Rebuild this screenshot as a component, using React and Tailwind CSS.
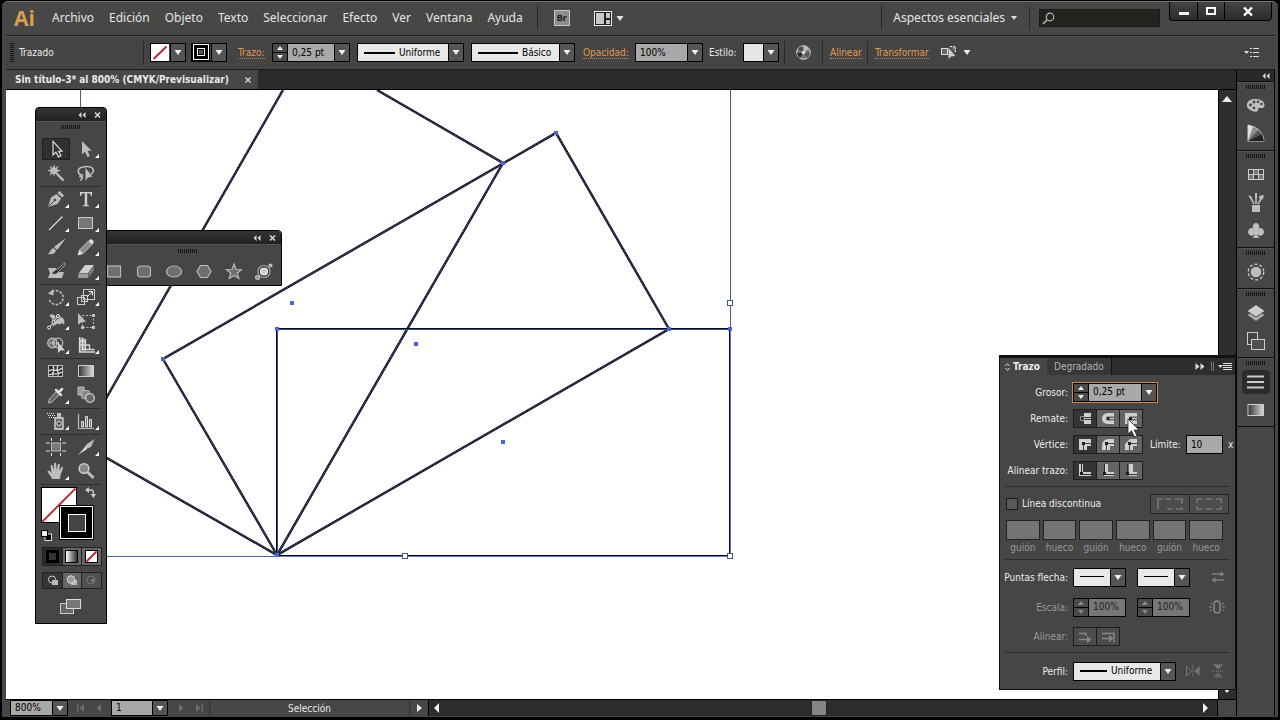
import React from "react";

const UI = "font-['DejaVu_Sans_Condensed','DejaVu_Sans',sans-serif]";
const MENU = "font-['Noto_Sans',sans-serif]";

/* ---------- small shared pieces ---------- */

function Down({ className = "" }) {
  return (
    <svg width="8" height="5" viewBox="0 0 8 5" className={`shrink-0 ${className}`} aria-hidden="true">
      <path d="M0.5 0H7.5L4 5Z" fill="currentColor" />
    </svg>
  );
}

function ArrowBox() {
  return (
    <span className="pointer-events-none flex w-[15px] shrink-0 items-center justify-center self-stretch border-l border-black bg-[#555] text-[#f0f0f0]">
      <Down />
    </span>
  );
}

function Grip() {
  return (
    <svg width="20" height="4" viewBox="0 0 20 4" aria-hidden="true">
      <path d="M0.5 0V4M2.5 0V4M4.5 0V4M6.5 0V4M8.5 0V4M10.5 0V4M12.5 0V4M14.5 0V4M16.5 0V4M18.5 0V4" stroke="#161616" />
    </svg>
  );
}

function Spinner({ label, dim }) {
  return (
    <span className={`flex w-[15px] shrink-0 flex-col border-r border-black bg-[#4a4a4a] ${dim ? "text-[#8a8a8a]" : "text-[#eee]"}`}>
      <button aria-label={`Aumentar ${label}`} className="flex flex-1 items-center justify-center border-b border-black">
        <svg width="6" height="4" viewBox="0 0 6 4"><path d="M0 4H6L3 0Z" fill="currentColor" /></svg>
      </button>
      <button aria-label={`Reducir ${label}`} className="flex flex-1 items-center justify-center">
        <svg width="6" height="4" viewBox="0 0 6 4"><path d="M0 0H6L3 4Z" fill="currentColor" /></svg>
      </button>
    </span>
  );
}

function LineSelect({ label, text, width, line }) {
  return (
    <span className={`flex h-[19px] items-center border border-black bg-[#e8e8e8] text-black ${width}`}>
      <svg height="2" viewBox={`0 0 ${line} 2`} width={line} className="ml-1.5 shrink-0" aria-hidden="true">
        <path d={text ? `M0 1H${line}` : `M0 .5H${line}`} stroke="#000" strokeWidth={text ? 2 : 1} />
      </svg>
      <select aria-label={label} className="ml-1 h-[17px] min-w-0 flex-1 appearance-none bg-transparent text-[10px] leading-4 outline-none">
        <option>{text}</option>
      </select>
      <ArrowBox />
    </span>
  );
}

function NumberCombo({ label, value, width, arrow = true, spinner = true, dim }) {
  return (
    <span className={`flex h-[19px] items-stretch border border-black ${width} ${dim ? "bg-[#777] text-[#222]" : "bg-[#a9a9a9] text-black"}`}>
      {spinner && <Spinner label={label} dim={dim} />}
      <input aria-label={label} defaultValue={value} className="min-w-0 flex-1 bg-transparent px-1 text-[10px] leading-3.5 outline-none" />
      {arrow && (
        <button aria-label={`${label}: valores`} className="flex">
          <ArrowBox />
        </button>
      )}
    </span>
  );
}

function Sep() {
  return <span className="h-6 w-px shrink-0 bg-[#2b2b2b]" />;
}

function Orange({ children }) {
  return (
    <a href="#panel" className="border-b border-dotted border-[#c9843f] leading-[11px] text-[#e39a52]">
      {children}
    </a>
  );
}

/* ---------- top bars ---------- */

const menus = ["Archivo", "Edición", "Objeto", "Texto", "Seleccionar", "Efecto", "Ver", "Ventana", "Ayuda"];

function TitleBar() {
  return (
    <header className={`flex h-[33px] shrink-0 items-start pl-2 text-[12px] text-[#e6e6e6] ${MENU}`}>
      <div className="flex h-8 w-[38px] shrink-0 items-center font-['Open_Sans',sans-serif] text-[21px] leading-none font-bold text-[#d6a050]">Ai</div>
      <nav className="flex h-8 items-center gap-[15px]">
        {menus.map((m) => (
          <button key={m}>{m}</button>
        ))}
      </nav>
      <div className="ml-3.5 flex h-8 items-center">
        <Sep />
        <button className="ml-4 flex h-4 w-4 items-center justify-center border border-[#c8c8c8] bg-[#8d8d8d] text-[9px] font-bold text-[#1a1a1a]">Br</button>
        <button aria-label="Organizar documentos" className="ml-6 flex items-center gap-1">
          <svg width="18" height="15" viewBox="0 0 18 15">
            <path d="M0 0H18V15H0Z" fill="#eee" />
            <path d="M1 1H17V14H1Z" fill="#222" />
            <path d="M2 2H10V13H2ZM12 2H16V7H12ZM12 9H16V13H12Z" fill="#c8c8c8" />
          </svg>
          <Down />
        </button>
      </div>
      <div className="ml-auto flex h-8 items-center">
        <Sep />
        <button className="ml-[11px] flex items-center gap-1.5">
          Aspectos esenciales
          <svg width="6" height="4" viewBox="0 0 6 4"><path d="M0 0H6L3 4Z" fill="#ddd" /></svg>
        </button>
        <span className="ml-3 flex"><Sep /></span>
        <div className="ml-[9px] flex h-[18px] w-[121px] items-center border border-[#1a1a1a] bg-[#222420] pl-0.5">
          <svg width="13" height="13" viewBox="0 0 13 13" aria-hidden="true">
            <circle cx="8" cy="5" r="3.8" fill="none" stroke="#bbb" strokeWidth="1.2" />
            <path d="M5.2 7.8L1 12" stroke="#bbb" strokeWidth="1.5" />
          </svg>
          <input aria-label="Buscar" className="h-4 min-w-0 flex-1 bg-transparent text-[10px] leading-4 outline-none" />
        </div>
      </div>
      <div className="mr-[3px] ml-[9px] flex h-[19px] overflow-hidden rounded-b border border-t-0 border-black bg-linear-to-b from-[#444] to-[#2b2b2b]">
        <button aria-label="Minimizar" className="flex w-7 items-center justify-center border-r border-black">
          <span className="mt-1 h-[3px] w-2.5 bg-white" />
        </button>
        <button aria-label="Maximizar" className="flex w-[27px] items-center justify-center border-r border-black">
          <span className="h-2 w-2.5 border-2 border-white" />
        </button>
        <button aria-label="Cerrar" className="flex w-[46px] items-center justify-center">
          <svg width="10" height="9" viewBox="0 0 10 9"><path d="M1 0.5L9 8.5M9 0.5L1 8.5" stroke="#fff" strokeWidth="2.4" /></svg>
        </button>
      </div>
    </header>
  );
}

function SwatchButton({ label, children }) {
  return (
    <button aria-label={label} className="flex h-[19px] w-9 shrink-0 border border-black">
      <span className="flex min-w-0 flex-1">{children}</span>
      <ArrowBox />
    </button>
  );
}

function ControlBar() {
  return (
    <div className={`flex h-[35px] shrink-0 items-center border-y border-[#1c1c1c] bg-[#444] pl-1 text-[10px] whitespace-nowrap text-[#eaeaea] shadow-[inset_0_1px_0_#555] ${UI}`}>
      <svg width="4" height="20" viewBox="0 0 4 20" className="shrink-0" aria-hidden="true">
        <path d="M0 .5H4M0 2.5H4M0 4.5H4M0 6.5H4M0 8.5H4M0 10.5H4M0 12.5H4M0 14.5H4M0 16.5H4M0 18.5H4" stroke="#1a1a1a" />
      </svg>
      <span className="ml-[5px] w-[124px] shrink-0">Trazado</span>
      <Sep />
      <div className="ml-1.5 flex gap-[5px]">
        <SwatchButton label="Relleno">
          <svg width="18" height="17" viewBox="0 0 18 17"><path d="M0 0H18V17H0Z" fill="#fff" /><path d="M2.5 15L15.5 2.500" stroke="#b8222c" strokeWidth="1.8" /></svg>
        </SwatchButton>
        <SwatchButton label="Trazo">
          <svg width="18" height="17" viewBox="0 0 18 17"><path d="M0 0H18V17H0Z" fill="#000" /><rect x="1.500" y="0.500" width="15" height="15" fill="none" stroke="#fff" /><rect x="5" y="4" width="8" height="8" fill="#fff" /><rect x="6" y="5" width="6" height="6" fill="#000" /><rect x="7" y="6" width="4" height="4" fill="#555" /></svg>
        </SwatchButton>
      </div>
      <span className="ml-[11px] w-[34px]"><Orange>Trazo:</Orange></span>
      <NumberCombo label="Grosor de trazo" value="0,25 pt" width="w-[78px]" />
      <span className="ml-[7px] flex gap-[7px]">
        <LineSelect label="Perfil de anchura" text="Uniforme" width="w-[107px]" line={31} />
        <LineSelect label="Definición de pincel" text="Básico" width="w-[104px]" line={40} />
      </span>
      <span className="ml-2 w-[52px]"><Orange>Opacidad:</Orange></span>
      <NumberCombo label="Opacidad" value="100%" width="w-[68px]" spinner={false} />
      <span className="ml-1.5 w-[34px]">Estilo:</span>
      <SwatchButton label="Estilo gráfico"><span className="flex-1 bg-[#e6e6e6]" /></SwatchButton>
      <span className="ml-[5px] flex"><Sep /></span>
      <button aria-label="Volver a colorear ilustración" className="mx-[11px]">
        <svg width="15" height="15" viewBox="0 0 15 15">
          <circle cx="7.500" cy="7.500" r="6.800" fill="#777" stroke="#ddd" />
          <path d="M7.500 7.500L7.500 1A6.500 6.500 0 0 1 13 4Z" fill="#bbb" />
          <path d="M7.500 7.500L14 7.500A6.500 6.500 0 0 1 11 13Z" fill="#555" />
          <path d="M7.500 7.500L4 13A6.500 6.500 0 0 1 1 8Z" fill="#2b2b2b" />
          <path d="M7.500 7.500L2 4A6.500 6.500 0 0 1 6 1.200Z" fill="#444" />
          <circle cx="7.500" cy="7.500" r="1.800" fill="#ddd" />
        </svg>
      </button>
      <Sep />
      <span className="ml-[7px] w-[37px]"><Orange>Alinear</Orange></span>
      <Sep />
      <span className="ml-[7px]"><Orange>Transformar</Orange></span>
      <button aria-label="Seleccionar objetos similares" className="ml-3 flex items-center gap-1.5">
        <svg width="16" height="15" viewBox="0 0 16 15">
          <rect x="0.500" y="3.500" width="6" height="6" fill="#666" stroke="#ddd" />
          <path d="M9 1.500H14.500V8" fill="#777" stroke="#ddd" strokeDasharray="2 1" />
          <path d="M7.500 2.500V14L10 11.500L14.500 11Z" fill="#ccc" />
        </svg>
        <Down />
      </button>
      <button aria-label="Menú del panel Control" className="mr-4 ml-auto">
        <svg width="15" height="9" viewBox="0 0 15 9"><path d="M0 3H5L2.500 6Z" fill="#ddd" /><path d="M6 .5H8M9 .5H15M6 4.500H8M9 4.500H15M6 8.500H8M9 8.500H15" stroke="#ddd" /></svg>
      </button>
    </div>
  );
}

/* ---------- tool icons (18 x 18) ---------- */

const L = "#bdbdbd";
const toolIcons = {
  sel: <path d="M6 1.500V15L9 12.200L11.500 17L14 15.800L11.700 11.200H15Z" fill="#333" stroke="#e8e8e8" strokeWidth="1.100" />,
  direct: <path d="M5 1V14.500L8 11.700L10.500 17L12.800 16L10.500 10.700H14.500Z" fill={L} />,
  wand: <><path d="M7 0L8.200 4L11.500 1.500L10 5.200L14 6.500L10 8L11.500 11.500L8 9.500L7 13L6 9.500L2.500 11.500L4 8L0 6.500L4 5.200L2.500 1.500L5.800 4Z" fill={L} /><path d="M10 10L16.500 16.500" stroke={L} strokeWidth="2.400" /></>,
  lasso: <><path d="M4 11C0 9 0 4 6 3C12 1.500 17 3.500 16.500 7C16.300 8.500 15 9.500 14 10M4 11C2.500 11 2.500 13.500 4.500 13C6.500 12.500 5 10 4 11M5 13C6 15 4 16 3 16" fill="none" stroke={L} strokeWidth="1.600" /><path d="M8.500 4V17L11 13.500L15.500 12.500Z" fill={L} /></>,
  pen: <><path d="M1 17L4 7.500L9.500 4L14 8.500L10.500 14Z" fill={L} /><path d="M10.500 3L12.500 1L17 5.500L15 7.500Z" fill={L} /><path d="M1.500 16.500L7.500 10.500" stroke="#444" /><circle cx="8" cy="10" r="1.300" fill="#444" /></>,
  type: <path d="M3 2H15V6H14C13.700 4 13 3.300 11 3.300H10.200V14C10.200 15 10.800 15.300 12.200 15.400V16.300H5.800V15.400C7.200 15.300 7.800 15 7.800 14V3.300H7C5 3.300 4.300 4 4 6H3Z" fill="#cfcfcf" />,
  line: <path d="M2 16L15.500 2.500" stroke="#d8d8d8" strokeWidth="1.300" />,
  rect: <rect x="1.500" y="3.500" width="14" height="11" fill="#777" stroke="#ccc" />,
  brush: <><path d="M17.500 1.500L10 11.500L7.500 9Z" fill={L} stroke={L} /><path d="M6.500 10L9 12.500C8.500 15.500 5 17 0.500 16C3.500 15 3 11 6.500 10Z" fill={L} /></>,
  pencil: <><path d="M1 17L2.500 12L11.500 3L15 6.500L6 15.500Z" fill="#8d8d8d" stroke={L} /><path d="M11.500 3L13 1.500C14.500 0.500 17.500 3.500 16.500 5L15 6.500Z" fill="#ddd" /><path d="M1 17L2.500 12L6 15.500Z" fill="#ddd" /></>,
  blob: <><path d="M1 6H9V10H17L15 16H1L3 11Z" fill={L} /><path d="M17.500 1L10 7.500C7 7.500 7 10.500 4 11.500C7 13 11 12 11.500 9.500L18 3Z" fill="#2e2e2e" stroke={L} strokeWidth=".8" /></>,
  eraser: <><path d="M8 3H17L11 11H2Z" fill="#d0d0d0" /><path d="M1.500 11.500H11V16H1Z" fill="#9d9d9d" /><path d="M11.500 11L17 4V8L11.500 16Z" fill="#7d7d7d" /></>,
  rotate: <><path d="M5 4A7 7 0 1 1 2.500 12" fill="none" stroke={L} strokeWidth="1.600" strokeDasharray="2.500 1.500" /><path d="M1 5.500L6.500 1V7.500Z" fill={L} /></>,
  scale: <><rect x="6.500" y="1.500" width="11" height="10" fill="#444" stroke="#ccc" /><rect x="0.500" y="9.500" width="7" height="7" fill="none" stroke="#ccc" /><rect x="4.500" y="7.500" width="6" height="6" fill="none" stroke="#ccc" /><path d="M10 9L15 4M11.500 3.500H15.500V7.500" stroke="#eee" fill="none" /></>,
  width: <><path d="M2 4C6 0 8 4 10 7C12 8 12 4 14 5C17 6 18 9 17 13C15 9 14 13 11 12C9 11 8 15 4 14C7 10 6 6 2 4Z" fill={L} /><path d="M2 16L11 4" stroke="#444" strokeWidth="2.200" /><path d="M2 16L11 4" stroke="#eee" /><circle cx="2" cy="15.500" r="1.500" fill="#444" stroke="#eee" /><circle cx="6.500" cy="10" r="1.500" fill="#444" stroke="#eee" /><circle cx="11" cy="4" r="1.500" fill="#444" stroke="#eee" /></>,
  free: <><path d="M1 1V13L4 10.500L9 9.500Z" fill={L} /><rect x="5.500" y="3.500" width="11" height="12" fill="none" stroke={L} strokeDasharray="2 1.500" /><path d="M15 2H18V5H15ZM15 14H18V17H15ZM4 14H7V17H4Z" fill={L} /></>,
  builder: <><circle cx="5.500" cy="7" r="4.800" fill="#777" stroke={L} strokeWidth="1.200" /><circle cx="11" cy="7" r="4.800" fill="none" stroke={L} strokeWidth="1.200" /><path d="M3 7H12" stroke="#eee" strokeDasharray="1 1" /><path d="M11 6V17L13.500 14.500H18Z" fill="#d0d0d0" /></>,
  persp: <><path d="M2 1L9 3V15H2Z" fill="#999" /><path d="M2.500 1V16.500M5.500 1.500V13M8.500 3V13M2 5H9M2 9H13M5 13.500H17.500M12.500 9V13M2 16H18" fill="none" stroke="#d8d8d8" strokeWidth="1.300" /></>,
  mesh: <><rect x="1.500" y="3.500" width="14" height="11" fill="#2a2a2a" stroke={L} /><path d="M2 9C6 5 9 12 15 6M2 13C7 10 10 14 15 10M6 4C9 8 4 11 6 14M11 4C8 8 13 10 11 14" fill="none" stroke="#ddd" strokeWidth="1.300" /></>,
  grad: <><defs><linearGradient id="tg"><stop offset="0" stopColor="#333" /><stop offset="1" stopColor="#ddd" /></linearGradient></defs><rect x="1.500" y="3.500" width="15" height="11" fill="url(#tg)" stroke="#ccc" /></>,
  dropper: <><path d="M10 5L13 8L5 16L1.500 17L2.500 13Z" fill="#666" stroke={L} /><path d="M9 4L14 9M11.500 6.500L15 3" stroke="#ddd" strokeWidth="2.500" strokeLinecap="round" /></>,
  blend: <><path d="M1 1H7V9H1Z" fill="#999" stroke={L} /><rect x="4.500" y="4.500" width="8" height="8" rx="2" fill="#888" stroke={L} /><circle cx="13" cy="12" r="4.300" fill="#666" stroke="#d0d0d0" strokeWidth="1.300" /></>,
  spray: <><path d="M8 6H16V17H8Z" fill="#666" stroke="#ddd" strokeWidth="1.300" /><path d="M10 1H14V5H10Z" fill={L} /><circle cx="12" cy="11.500" r="2" fill="#333" stroke="#eee" /><path d="M0 1.500H8M1 3.500H8M2 5.500H7" stroke="#eee" strokeDasharray="1 1" /></>,
  graph: <><path d="M1.500 2V16.500H17" stroke={L} fill="none" strokeWidth="1.200" /><path d="M4.500 9.500H6.500V15H4.500ZM8.500 4.500H10.500V15H8.500ZM12.500 7.500H14.500V15H12.500Z" fill="#777" stroke="#ddd" /></>,
  artboard: <><rect x="4.500" y="5" width="9" height="8" fill="#777" stroke="#bbb" /><path d="M4.500 0V3M13.500 0V3M4.500 15V18M13.500 15V18M-1 5H3M15 5H19M-1 13H3M15 13H19" stroke="#ddd" /></>,
  slice: <><path d="M17.500 1L14 9L6 12L10 6Z" fill={L} /><path d="M9 8L1 17L10 11Z" fill="#ddd" /></>,
  hand: <path d="M5 17C4 14 1 11 0.500 9C1.500 8 3 9 4.500 11L3.500 3.500C4 2.500 5.200 2.700 5.500 3.500L6.800 8L7 1.500C7.500 0.500 8.800 0.500 9.200 1.500L9.500 8L11 2.200C11.500 1.300 12.800 1.700 12.900 2.700L12.200 8.500L14.500 5C15.200 4.300 16.200 5 16 6L13.500 13L13 17Z" fill={L} />,
  zoom: <><circle cx="7" cy="6.500" r="4.800" fill="#888" stroke="#ccc" strokeWidth="1.500" /><path d="M10.500 10L16.500 16" stroke={L} strokeWidth="3" /></>,
};

const toolGroups = [
  [["sel", "Selección", 0], ["direct", "Selección directa", 1], ["wand", "Varita mágica", 0], ["lasso", "Lazo", 0]],
  [["pen", "Pluma", 1], ["type", "Texto", 1], ["line", "Segmento de línea", 1], ["rect", "Rectángulo", 1], ["brush", "Pincel", 0], ["pencil", "Lápiz", 1], ["blob", "Pincel de manchas", 0], ["eraser", "Borrador", 1]],
  [["rotate", "Rotar", 1], ["scale", "Escala", 1], ["width", "Anchura", 1], ["free", "Transformación libre", 0], ["builder", "Creador de formas", 1], ["persp", "Cuadrícula de perspectiva", 1]],
  [["mesh", "Malla", 0], ["grad", "Degradado", 0], ["dropper", "Cuentagotas", 1], ["blend", "Fusión", 0]],
  [["spray", "Rociar símbolos", 1], ["graph", "Gráfica", 1]],
  [["artboard", "Mesa de trabajo", 0], ["slice", "Sector", 1], ["hand", "Mano", 1], ["zoom", "Zoom", 0]],
];

function FloatHeader() {
  return (
    <div className="flex h-[13px] items-center justify-end gap-2 bg-linear-to-b from-[#333] to-[#222] pr-[5px] text-[#d8d8d8]">
      <button aria-label="Contraer panel">
        <svg width="8" height="6" viewBox="0 0 8 6"><path d="M3.500 0V6L0.500 3ZM7.500 0V6L4.500 3Z" fill="currentColor" /></svg>
      </button>
      <button aria-label="Cerrar panel">
        <svg width="7" height="6" viewBox="0 0 7 6"><path d="M1 0.500L6 5.500M6 0.500L1 5.500" stroke="currentColor" strokeWidth="1.500" /></svg>
      </button>
    </div>
  );
}

function ToolPanel() {
  return (
    <aside aria-label="Herramientas" className="absolute top-[17px] left-[29px] w-[72px] overflow-hidden rounded-t border border-black bg-[#464646] pb-2">
      <FloatHeader />
      <div className="flex h-4 items-start justify-center border-t border-[#555] pt-[3px]"><Grip /></div>
      <div className="px-[5px]">
        {toolGroups.map((g, i) => (
          <div key={i} className="grid grid-cols-2 border-b border-[#2e2e2e] pb-px">
            {g.map(([id, name, more]) => (
              <button key={id} aria-label={name} className="relative flex h-6 items-center justify-center">
                <span className={`flex h-[22px] w-7 items-center justify-center ${id === "sel" ? "border border-[#1f1f1f] bg-[#303030]" : ""}`}>
                  <svg width="18" height="18" viewBox="0 0 18 18" overflow="visible">{toolIcons[id]}</svg>
                </span>
                {more ? (
                  <svg width="4" height="4" viewBox="0 0 3 3" className="absolute right-0.5 bottom-[3px]"><path d="M3 0V3H0Z" fill="#fff" /></svg>
                ) : null}
              </button>
            ))}
          </div>
        ))}
        <div className="relative h-[62px]">
          <button aria-label="Relleno" className="absolute top-0.5 left-0 h-[36px] w-[36px] border border-black bg-white">
            <svg width="34" height="34" viewBox="0 0 33 33"><path d="M0.500 32.500L32.500 0.500" stroke="#b8222c" strokeWidth="1.800" /></svg>
          </button>
          <button aria-label="Trazo" className="absolute top-5 left-[18px] flex h-[35px] w-[35px] items-center justify-center border border-black bg-black outline-1 -outline-offset-2 outline-white">
            <span className="h-[18px] w-[18px] border border-white bg-[#444]" />
          </button>
          <button aria-label="Intercambiar relleno y trazo" className="absolute top-0.5 right-[5px]">
            <svg width="11" height="11" viewBox="0 0 11 11"><path d="M3 3H6Q8.500 3 8.500 6V8" fill="none" stroke="#ccc" strokeWidth="1.300" /><path d="M4 0V6L0 3ZM5.500 7H11L8.500 11Z" fill="#ccc" /></svg>
          </button>
          <button aria-label="Relleno y trazo por defecto" className="absolute bottom-1.5 left-0">
            <svg width="11" height="11" viewBox="0 0 11 11"><rect x="4" y="4" width="6.500" height="6.500" fill="#000" stroke="#ddd" /><rect x="0.500" y="0.500" width="6" height="6" fill="#ddd" stroke="#000" /><rect x="1.500" y="1.500" width="4" height="4" fill="#fff" /></svg>
          </button>
        </div>
        <div className="mr-[-1px] ml-px grid grid-cols-3 border border-[#222]">
          <button aria-label="Color" className="flex h-[17px] items-center justify-center bg-[#2c2c2c]"><span className="h-[13px] w-[13px] border-3 border-black bg-[#333]" /></button>
          <button aria-label="Degradado" className="flex h-[17px] items-center justify-center border-x border-[#222] bg-[#666]"><span className="h-[13px] w-[13px] border border-black bg-linear-to-r from-white to-[#333]" /></button>
          <button aria-label="Ninguno" className="flex h-[17px] items-center justify-center bg-[#666]">
            <svg width="13" height="13" viewBox="0 0 13 13"><rect x=".5" y=".5" width="12" height="12" fill="#fff" stroke="#000" /><path d="M1.500 11.500L11.500 1.500" stroke="#b8222c" strokeWidth="1.800" /></svg>
          </button>
        </div>
        <div className="mr-[-1px] mt-1.5 ml-px grid grid-cols-3 border border-[#222]">
          {["Dibujar normal", "Dibujar detrás", "Dibujar dentro"].map((n, i) => (
            <button key={n} aria-label={n} className={`flex h-[15px] items-center justify-center ${["bg-[#363636]", "border-x border-[#222] bg-[#666]", "bg-[#555] opacity-60"][i]}`}>
              <svg width="12" height="11" viewBox="0 0 12 11">
                {i === 0 && <><circle cx="5" cy="4.500" r="3.500" fill="none" stroke="#ccc" /><rect x="5" y="5" width="6" height="5" fill="#bbb" /></>}
                {i === 1 && <><rect x="5" y="5" width="6" height="5" fill="#bbb" /><circle cx="5" cy="4.500" r="3.800" fill="#999" stroke="#ddd" /></>}
                {i === 2 && <><circle cx="6" cy="5" r="4" fill="none" stroke="#999" /><rect x="6" y="4" width="3" height="3" fill="#999" /></>}
              </svg>
            </button>
          ))}
        </div>
        <button aria-label="Modo de pantalla" className="mx-auto mt-2 block h-[18px]">
          <svg width="22" height="17" viewBox="0 0 22 17"><rect x="0.500" y="5.500" width="13" height="10" fill="#666" stroke="#ccc" /><rect x="6.500" y="1.500" width="14" height="9" fill="#777" stroke="#ddd" /></svg>
        </button>
      </div>
    </aside>
  );
}

const shapes = [
  ["Rectángulo", <rect x="1.500" y="3" width="13" height="11" />],
  ["Rectángulo redondeado", <rect x="1.500" y="3" width="13" height="11" rx="3" />],
  ["Elipse", <ellipse cx="8" cy="8.500" rx="7.500" ry="5.500" />],
  ["Polígono", <path d="M4.500 2.500H11.500L15 8.500L11.500 14.500H4.500L1 8.500Z" />],
  ["Estrella", <path d="M8 1L10 6.500L15.500 6.700L11.200 10.200L12.800 15.500L8 12.500L3.200 15.500L4.800 10.200L.5 6.700L6 6.500Z" />],
  ["Destello", <><circle cx="8" cy="8.500" r="6" fill="#333" stroke="#aaa" /><circle cx="8" cy="8.500" r="3.500" fill="#ccc" stroke="#eee" /><circle cx="14.500" cy="2.500" r="1.500" fill="#ccc" /><circle cx="1.500" cy="14.500" r="2" fill="#999" /></>],
];

function ShapesPanel() {
  return (
    <aside aria-label="Formas" className="absolute top-[140px] left-[88px] w-[188px] overflow-hidden rounded-t border border-black bg-[#464646]">
      <FloatHeader />
      <div className="flex h-[19px] items-start justify-center border-t border-[#555] pt-1"><Grip /></div>
      <div className="flex justify-end gap-3.5 pr-[9px] pb-[5px]">
        {shapes.map(([n, g]) => (
          <button key={n} aria-label={n}>
            <svg width="16" height="17" viewBox="0 0 16 17" fill="#6e6e6e" stroke="#b8b8b8" strokeWidth="1.200" overflow="visible">{g}</svg>
          </button>
        ))}
      </div>
    </aside>
  );
}

/* ---------- artwork ---------- */

const rotated = ["M283 90L80.500 443L277 555L503 163L377 90", "M277 555L163 359L556 133L669 329Z"];
const anchors = [[163, 359], [277, 329], [277, 555], [503, 163], [556, 133], [669, 329], [730, 329], [292, 303], [416, 344], [503, 442]];
const handles = [[730, 303], [405, 556], [730, 556]];

function Artwork() {
  return (
    <svg className="absolute top-0 left-0" width="1212" height="610" viewBox="6 90 1212 610" role="img" aria-label="Ilustración">
      <path d="M80.500 90V556.500H730.500V90" fill="none" stroke="#4b5d8c" />
      {rotated.map((d) => (
        <g key={d} fill="none">
          <path d={d} stroke="#08081c" strokeWidth="2.400" />
          <path d={d} stroke="#8f9cc8" strokeWidth=".8" strokeDasharray="1 1" />
        </g>
      ))}
      <path d="M277 328.500H730M729.500 328V555M277 555.500H730M276.500 328V555" fill="none" stroke="#07071c" />
      <path d="M277.500 329V555M278 329.500H730" fill="none" stroke="#3d4780" />
      <path d="M277 556.500H730.500V329" fill="none" stroke="#6478cc" />
      {anchors.map(([x, y]) => <rect key={`${x}-${y}`} x={x - 2} y={y - 2} width="4" height="4" fill="#4a67cf" />)}
      {handles.map(([x, y]) => <rect key={`${x}-${y}`} x={x - 2.5} y={y - 2.5} width="5" height="5" fill="#fff" stroke="#45577c" />)}
    </svg>
  );
}

/* ---------- stroke panel ---------- */

function Row({ label, dim, children, h = "h-[26px]" }) {
  return (
    <div className={`flex ${h} items-center`}>
      <span className={`w-[73px] shrink-0 pr-[5px] text-right whitespace-nowrap ${dim ? "text-[#999]" : ""}`}>{label}</span>
      {children}
    </div>
  );
}

function Segments({ names, icons, dim }) {
  return (
    <span className="flex">
      {names.map((n, i) => (
        <button key={n} aria-label={n} className={`-mr-px flex h-[19px] w-6 items-center justify-center border border-[#1d1d1d] ${dim ? "bg-[#4c4c4c]" : i === 0 ? "bg-[#343434]" : "bg-[#646464]"}`}>
          <svg width="14" height="13" viewBox="0 0 14 13">{icons[i]}</svg>
        </button>
      ))}
    </span>
  );
}

const G = "#cfcfcf";
const capIcons = [
  <><path d="M6 1H13V12H6Z" fill={G} /><path d="M5 5H13V8H5Z" fill="#333" /><path d="M6 6.500H13" stroke={G} /><path d="M2.500 4.500H6V8.500H2.500Z" stroke="#999" fill="#222" /></>,
  <><path d="M13 1H7Q1 1.500 1 6.500Q1 11.500 7 12H13V8.500H5.500V4.500H13Z" fill={G} /><path d="M6 6.500H13" stroke={G} /><circle cx="7" cy="6.500" r="1.500" fill="#222" /></>,
  <><path d="M13 1H1V12H13V8.500H5.500V4.500H13Z" fill={G} /><path d="M6 6.500H13" stroke={G} /><path d="M5 5H8V8H5Z" fill="#222" /></>,
];
const cornerIcons = ["M1 1H13V8H9V12H1Z", "M13 1H8Q1 1 1 8V12H9V8H13Z", "M13 1H6L1 6V12H9V8H13Z"].map((d) => (
  <><path d={d} fill={G} /><path d="M5.500 12V5.500H13" fill="none" stroke="#444" /><path d="M4 4H7V7H4Z" fill="#222" /></>
));
const alignIcons = [1, 3, 5].map((x) => (
  <><path d={`M${x} 0H${x + 4}V8H13V12H${x}Z`} fill={G} /><path d="M3.500 0V10.500H13" fill="none" stroke="#2c2c2c" /><path d="M2 8H5V11H2Z" fill="#1c1c1c" /></>
));
const dashIcons = ["M1 11V1H6M8 1H14M18 1H25V6M10 11H15M19 11H25V9", "M1 5V1H6M10 1H16M20 1H25V5M25 8V11H20M16 11H10M6 11H1V8"];

function StrokePanel() {
  return (
    <aside aria-label="Trazo" className={`absolute top-[285px] right-0 w-[237px] border border-t-3 border-[#111] bg-[#464646] text-[10px] text-[#ececec] ${UI}`}>
      <div className="flex h-[17px] items-stretch bg-[#2d2d2d]">
        <button className="flex items-center gap-[3px] bg-[#464646] pr-[7px] pl-[5px] font-bold">
          <svg width="5" height="8" viewBox="0 0 5 8"><path d="M0.500 3L2.500 .7L4.500 3M0.500 5L2.500 7.300L4.500 5" fill="none" stroke="#ddd" /></svg>
          Trazo
        </button>
        <button className="border-r border-[#111] bg-[#383838] px-[7px] text-[#b4b4b4]">Degradado</button>
        <button aria-label="Contraer a iconos" className="ml-auto">
          <svg width="10" height="7" viewBox="0 0 10 7"><path d="M0.500 0V7L4.500 3.500ZM5.500 0V7L9.500 3.500Z" fill="#ddd" /></svg>
        </button>
        <span className="my-1 ml-1.5 w-[3px] border-x border-[#777]" />
        <button aria-label="Menú del panel" className="mr-[3px] ml-1">
          <svg width="14" height="8" viewBox="0 0 14 8"><path d="M0 2H5L2.500 5Z" fill="#ddd" /><path d="M5 .5H14M5 2.500H14M5 4.500H14M5 6.500H14" stroke="#ddd" /></svg>
        </button>
      </div>
      <div className="pt-1">
        <Row label="Grosor:">
          <span className="flex outline-1 outline-[#d88352]"><NumberCombo label="Grosor" value="0,25 pt" width="w-[84px]" /></span>
        </Row>
        <Row label="Remate:">
          <Segments names={["Remate angular", "Remate redondo", "Remate saliente"]} icons={capIcons} />
        </Row>
        <Row label="Vértice:">
          <Segments names={["Unión en inglete", "Unión redonda", "Unión en bisel"]} icons={cornerIcons} />
          <label className="ml-2 flex items-center gap-[5px]">
            Límite:
            <input defaultValue="10" className="h-[19px] w-[37px] border border-black bg-[#a9a9a9] px-1 text-black outline-none" />
            x
          </label>
        </Row>
        <Row label="Alinear trazo:">
          <Segments names={["Alinear al centro", "Alinear al interior", "Alinear al exterior"]} icons={alignIcons} />
        </Row>
      </div>
      <div className="mx-[5px] mt-[3px] border-t border-[#2e2e2e]" />
      <div className="mt-[6px] flex h-[21px] items-center pr-1.5 pl-1.5">
        <label className="flex items-center gap-1">
          <input type="checkbox" className="h-3 w-3 appearance-none border border-[#1c1c1c] bg-[#5a5a5a]" />
          Línea discontinua
        </label>
        <span className="ml-auto flex">
          {dashIcons.map((d, i) => (
            <button key={d} aria-label={i ? "Alinear guiones a vértices" : "Conservar longitud de guiones"} className="-ml-px flex h-5 w-10 items-center justify-center border border-[#262626] bg-[#4c4c4c]">
              <svg width="26" height="12" viewBox="0 0 26 12"><path d={d} fill="none" stroke="#858585" strokeWidth="1.200" /></svg>
            </button>
          ))}
        </span>
      </div>
      <div className="mt-1.5 grid grid-cols-6 gap-[3px] pr-3 pl-1.5 text-center text-[#999]">
        {["guión", "hueco", "guión", "hueco", "guión", "hueco"].map((t, i) => (
          <label key={i} className="flex flex-col-reverse">
            <span className="h-4 leading-4">{t}</span>
            <input disabled className="h-5 w-full border border-[#222] bg-[#747474]" />
          </label>
        ))}
      </div>
      <div className="mx-[5px] mt-[3px] border-t border-[#2e2e2e]" />
      <div className="pt-0.5">
        <Row label="Puntas flecha:" h="h-[30px]">
          <LineSelect label="Punta inicial" text="" width="w-[53px]" line={24} />
          <span className="ml-[11px]"><LineSelect label="Punta final" text="" width="w-[53px]" line={24} /></span>
          <button aria-label="Intercambiar puntas" className="mr-2.5 ml-auto">
            <svg width="14" height="12" viewBox="0 0 14 12"><path d="M1 3H11M13 9H3" stroke="#808080" strokeWidth="1.500" /><path d="M9.500 0L13.500 3L9.500 6ZM4.500 6L.5 9L4.500 12Z" fill="#808080" /></svg>
          </button>
        </Row>
        <Row label="Escala:" dim h="h-[30px]">
          <NumberCombo label="Escala inicial" value="100%" width="w-[53px]" arrow={false} dim />
          <span className="ml-[11px]"><NumberCombo label="Escala final" value="100%" width="w-[53px]" arrow={false} dim /></span>
          <button aria-label="Vincular escalas" className="mr-2.5 ml-auto">
            <svg width="16" height="14" viewBox="0 0 16 14"><rect x="5" y="1" width="6" height="12" rx="3" fill="none" stroke="#888" strokeWidth="1.500" /><path d="M0 7H3M13 7H16M1 3L3 4.500M15 3L13 4.500M1 11L3 9.500M15 11L13 9.500" stroke="#888" /></svg>
          </button>
        </Row>
        <Row label="Alinear:" dim h="h-7">
          <Segments dim names={["Extender punta", "Colocar punta en extremo"]} icons={[
            <><path d="M1 3.500H8V6M1 9.500H10" fill="none" stroke="#888" strokeWidth="1.400" /><path d="M9 6L13.500 9.500L9 13Z" fill="#888" /></>,
            <><path d="M1 3.500H13V12M1 8.500H8" fill="none" stroke="#888" strokeWidth="1.400" /><path d="M8 5L12.500 8.500L8 12Z" fill="#888" /></>,
          ]} />
        </Row>
      </div>
      <div className="mx-[5px] mt-0.5 border-t border-[#2e2e2e]" />
      <div className="pt-1 pb-1">
        <Row label="Perfil:" h="h-7">
          <LineSelect label="Perfil" text="Uniforme" width="w-[103px]" line={27} />
          <button aria-label="Voltear a lo largo" className="ml-auto">
            <svg width="14" height="12" viewBox="0 0 14 12"><path d="M.5 1L5.500 6L.5 11Z" fill="none" stroke="#777" /><path d="M13.500 1L8.500 6L13.500 11Z" fill="#777" /><path d="M7 0V12" stroke="#888" strokeDasharray="1 1" /></svg>
          </button>
          <button aria-label="Voltear a lo ancho" className="mr-[11px] ml-3">
            <svg width="12" height="14" viewBox="0 0 12 14"><path d="M1 .5H11L6 5.500Z" fill="#777" /><path d="M1 13.500H11L6 8.500Z" fill="#666" /><path d="M0 7H12" stroke="#888" strokeDasharray="1 1" /></svg>
          </button>
        </Row>
      </div>
      <svg width="13" height="20" viewBox="0 0 13 20" className="absolute top-[60px] left-[127px]" aria-hidden="true">
        <path d="M1 1V16L4.500 12.800L7.500 19L10 17.800L7.200 12H12Z" fill="#fff" stroke="#222" strokeWidth=".8" />
      </svg>
    </aside>
  );
}

/* ---------- status bar and dock ---------- */

function Nav({ d, label, dim = true, w = "w-[18px]" }) {
  return (
    <button aria-label={label} className={`flex h-full ${w} shrink-0 items-center justify-center ${dim ? "text-[#6d6d6d]" : "text-[#f0f0f0]"}`}>
      <svg width="10" height="10" viewBox="0 0 10 10"><path d={d} fill="currentColor" /></svg>
    </button>
  );
}

function StatusBar() {
  return (
    <footer className={`flex h-[17px] shrink-0 items-stretch border-t border-black bg-[#464646] text-[10px] text-[#eaeaea] ${UI}`}>
      <span className="ml-1 flex h-4 items-stretch"><NumberCombo label="Zoom" value="800%" width="w-[58px] max-h-4" spinner={false} /></span>
      <span className="ml-1 flex h-4">
        <Nav label="Primera" d="M1 1H2.500V9H1ZM8 1V9L3.500 5Z" />
        <Nav label="Anterior" d="M7 1V9L2.500 5Z" />
      </span>
      <span className="ml-[3px] flex h-4"><NumberCombo label="Mesa de trabajo" value="1" width="w-[57px] max-h-4" spinner={false} /></span>
      <span className="ml-1 flex h-4">
        <Nav label="Siguiente" d="M3 1V9L7.500 5Z" />
        <Nav label="Última" d="M2 1V9L6.500 5ZM7.500 1H9V9H7.500Z" />
      </span>
      <span className="ml-px flex w-[201px] items-center justify-center border-x border-[#333]">Selección</span>
      <Nav label="Opciones de estado" dim={false} d="M3 1V9L8 5Z" />
      <div className="flex min-w-0 flex-1 items-center justify-between border-x border-black bg-[#2c2c2c]">
        <Nav label="Desplazar a la izquierda" dim={false} w="w-4" d="M7 0V10L2 5Z" />
        <span className="h-full w-4 border border-[#222] bg-[#858585]" />
        <Nav label="Desplazar a la derecha" dim={false} w="w-6" d="M3 0V10L8 5Z" />
      </div>
      <span className="w-[18px]" />
    </footer>
  );
}

const dock = [
  [
    ["Color", <><path d="M9 3C14 3 18.500 5 18.500 9C18.500 12 16 12.500 14 12C12 11.700 11.500 13 12 14C12.500 15.500 10 16 8 15.500C3 14.500 0 11 1 8C2 4.500 5 3 9 3Z" fill={L} /><g fill="#444"><circle cx="4.500" cy="9" r="1.400" /><circle cx="8" cy="6" r="1.400" /><circle cx="12" cy="5.700" r="1.300" /><circle cx="15.500" cy="8" r="1.300" /><circle cx="8" cy="12" r="1.300" /></g></>],
    ["Guía de color", <><path d="M2 1V17H18Q17 4 2 1Z" fill="#8a8a8a" stroke="#ccc" /><path d="M2 17L7 2.500Q3 1 2 1Z" fill="#ddd" /><path d="M2 17L12.500 6L16 10Z" fill="#555" /><path d="M2 17L16 10L18 17Z" fill="#222" /></>],
  ],
  [
    ["Muestras", <><rect x="2" y="4" width="16" height="11" fill="#ccc" /><path d="M3 5H7V9H3ZM13 5H17V9H13ZM8 10H12V14H8Z" fill="#444" /><path d="M8 5H12V9H8ZM3 10H7V14H3ZM13 10H17V14H13Z" fill="#777" /></>],
    ["Pinceles", <><path d="M6 12H14V19H6Z" fill={L} /><path d="M8 11L4 3M10 11V1M12 11L16 4" stroke={L} strokeWidth="1.600" /><path d="M2 2L6 4L5 7ZM9 0H11V5H9ZM13 3L18 2L17 6L14 7Z" fill={L} /></>],
    ["Símbolos", <path d="M10 2A3.500 3.500 0 0 1 12.700 7.500A3.700 3.700 0 1 1 11 12.800Q11.500 16 13.500 17H6.500Q8.500 16 9 12.800A3.700 3.700 0 1 1 7.300 7.500A3.500 3.500 0 0 1 10 2Z" fill={L} />],
  ],
  [["Apariencia", <><circle cx="10" cy="10" r="7.800" fill="none" stroke="#ccc" strokeWidth="1.300" strokeDasharray="3 2" /><circle cx="10" cy="10" r="5.300" fill={L} /></>]],
  [
    ["Capas", <><path d="M10 2L18.500 8L10 13.500L1.500 8Z" fill="#ccc" /><path d="M1.500 12L4 10.500L10 14.500L16 10.500L18.500 12L10 18Z" fill="#aaa" /></>],
    ["Mesas de trabajo", <><rect x="1.500" y="1.500" width="10" height="12" fill="#444" stroke="#ccc" /><rect x="5.500" y="8.500" width="13" height="10" fill="#505050" stroke="#ccc" /></>],
  ],
  [
    ["Panel Trazo", <path d="M1 4.500H18M1 10H18M1 15.500H18" stroke="#ccc" strokeWidth="2" />],
    ["Panel Degradado", <><defs><linearGradient id="dg"><stop offset="0" stopColor="#333" /><stop offset="1" stopColor="#ddd" /></linearGradient></defs><rect x="2" y="4.500" width="15.500" height="11" fill="url(#dg)" stroke="#ccc" /></>],
  ],
];

function Dock() {
  return (
    <aside aria-label="Paneles" className="flex w-[39px] shrink-0 flex-col border-x border-black bg-[#464646]">
      <div className="flex h-[11px] items-center justify-end bg-[#292929] pr-1">
        <button aria-label="Expandir paneles">
          <svg width="8" height="6" viewBox="0 0 8 6"><path d="M3.500 0V6L0.500 3ZM7.500 0V6L4.500 3Z" fill="#ddd" /></svg>
        </button>
      </div>
      {dock.map((g, i) => (
        <div key={i} className="flex flex-col items-center border-t border-[#111] pb-0.5 shadow-[inset_0_1px_0_#555]">
          <span className="flex h-2.5 items-center"><Grip /></span>
          {g.map(([n, icon]) => (
            <button key={n} aria-label={n} className="flex h-7 items-center justify-center">
              <span className={`flex h-6 w-7 items-center justify-center rounded-sm ${n === "Panel Trazo" ? "bg-[#2c2c2c]" : ""}`}>
                <svg width="20" height="20" viewBox="0 0 20 20">{icon}</svg>
              </span>
            </button>
          ))}
        </div>
      ))}
      <div className="border-t border-[#111]" />
    </aside>
  );
}

export default function App() {
  return (
    <div className="flex h-screen min-h-[720px] flex-col bg-black px-0.5 pt-px pb-[3px]">
      <div className="flex min-h-0 flex-1 flex-col rounded-t-md border-t border-[#777] bg-[#474747] pr-[3px] pb-px pl-1">
        <TitleBar />
        <ControlBar />
        <div className="flex min-h-0 flex-1">
          <main className="relative flex min-w-0 flex-1 flex-col">
            <div className={`flex h-5 shrink-0 items-stretch border-b border-black bg-[#2b2b2b] text-[10px] text-[#eaeaea] ${UI}`}>
              <div className="flex items-center gap-4 bg-[#474747] pr-[7px] pl-[9px] font-bold">
                <span>Sin título-3* al 800% (CMYK/Previsualizar)</span>
                <button aria-label="Cerrar documento">
                  <svg width="6" height="6" viewBox="0 0 6 6"><path d="M.5 .5L5.500 5.500M5.500 .5L.5 5.500" stroke="#ddd" strokeWidth="1.200" /></svg>
                </button>
              </div>
            </div>
            <div className="flex min-h-0 flex-1">
              <div className="relative min-w-0 flex-1 overflow-hidden bg-white">
                <Artwork />
                <ShapesPanel />
                <ToolPanel />
              </div>
              <div className="flex w-[18px] shrink-0 flex-col items-center justify-between border-l border-black bg-[#2e2e2e] py-1.5 pr-0.5">
                <svg width="10" height="6" viewBox="0 0 10 6"><path d="M0 6H10L5 0Z" fill="#eee" /></svg>
                <svg width="8" height="5" viewBox="0 0 10 6"><path d="M0 0H10L5 6Z" fill="#eee" /></svg>
              </div>
            </div>
            <StatusBar />
            <StrokePanel />
          </main>
          <Dock />
        </div>
      </div>
    </div>
  );
}
